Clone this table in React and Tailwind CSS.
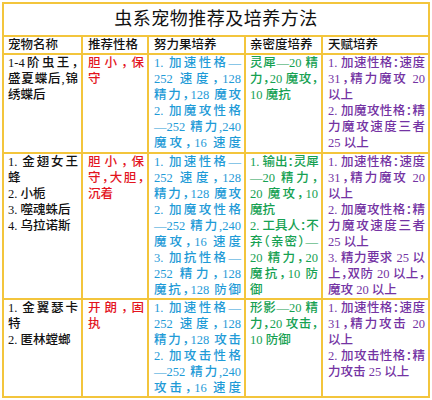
const j = (t) => ({ t, j: true });
const r = (t) => ({ t, j: false });

const headers = ["宠物名称", "推荐性格", "努力果培养", "亲密度培养", "天赋培养"];

const colColor = [
  "text-[#111111]",
  "text-[#e3141e]",
  "text-[#1f9bd7]",
  "text-[#16a152]",
  "text-[#7433a3]",
];

const colPad = ["pl-[4px] pr-[3px]", "pl-[5px] pr-[3px]", "pl-[5px] pr-[3px]", "pl-[4px] pr-[3px]", "pl-[5px] pr-[3px]"];

const rows = [
  [
    [j("1-4阶虫王，"), j("盛夏蝶后,锦"), r("绣蝶后")],
    [j("胆小，保"), r("守")],
    [j("1. 加速性格—"), j("252 速度，128"), j("精力，128 魔攻"), j("2. 加魔攻性格"), j("—252 精力,240"), j("魔攻，16 速度")],
    [j("灵犀—20 精"), j("力，20 魔攻，"), r("10 魔抗")],
    [j("1. 加速性格：速度"), j("31，精力魔攻 20"), r("以上"), j("2. 加魔攻性格：精"), j("力魔攻速度三者"), r("25 以上")],
  ],
  [
    [j("1. 金翅女王"), r("蜂"), r("2. 小栀"), r("3. 噬魂蛛后"), r("4. 乌拉诺斯")],
    [j("胆小，保"), j("守，大胆，"), r("沉着")],
    [
      j("1. 加速性格—"), j("252 速度，128"), j("精力，128 魔攻"),
      j("2. 加魔攻性格"), j("—252 精力,240"), j("魔攻，16 速度"),
      j("3. 加抗性格—"), j("252 精力，128"), j("魔抗，128 防御"),
    ],
    [
      j("1. 输出：灵犀"), j("—20 精力，"), j("20 魔攻，10"), r("魔抗"),
      j("2. 工具人：不"), j("弃（亲密）—"), j("20 精力，20"), j("魔抗，10 防"), r("御"),
    ],
    [
      j("1. 加速性格：速度"), j("31，精力魔攻 20"), r("以上"),
      j("2. 加魔攻性格：精"), j("力魔攻速度三者"), r("25 以上"),
      j("3. 精力要求 25 以"), j("上，双防 20 以上，"), r("魔攻 20 以上"),
    ],
  ],
  [
    [j("1. 金翼瑟卡"), r("特"), r("2. 匿林螳螂")],
    [j("开朗，固"), r("执")],
    [j("1. 加速性格—"), j("252 速度，128"), j("精力，128 攻击"), j("2. 加攻击性格"), j("—252 精力,240"), j("攻击，16 速度")],
    [j("形影—20 精"), j("力，20 攻击，"), r("10 防御")],
    [j("1. 加速性格：速度"), j("31，精力攻击 20"), r("以上"), j("2. 加攻击性格：精"), r("力攻击 25 以上")],
  ],
];

function Cell({ lines, col }) {
  return (
    <div className={`bg-white ${colPad[col]} ${colColor[col]}`}>
      {lines.map((line, i) => (
        <div
          key={i}
          className={
            line.j
              ? "h-4 leading-4 whitespace-nowrap text-justify [text-align-last:justify]"
              : "h-4 leading-4 whitespace-nowrap"
          }
        >
          {line.t}
        </div>
      ))}
    </div>
  );
}

export default function App() {
  return (
    <div className="w-[432px] h-[400px] bg-white pl-[2px] pt-[2px] font-['Liberation_Serif','Noto_Sans_CJK_SC',serif] text-[12.5px] font-medium [font-feature-settings:'halt']">
      <div className="w-[428px] grid grid-cols-[77px_64px_95px_75px_105px] grid-rows-[31px_16px_97px_144px_96px] gap-[2px] p-[2px] bg-[#f3c53c]">
        <div className="col-span-5 bg-white flex items-center justify-center text-[18px] font-normal text-[#111111] tracking-[0.5px]">
          虫系宠物推荐及培养方法
        </div>
        {headers.map((h, i) => (
          <div key={h} className={`bg-white ${colPad[i]} leading-4 text-[#111111]`}>
            {h}
          </div>
        ))}
        {rows.map((row, ri) =>
          row.map((lines, ci) => <Cell key={`${ri}-${ci}`} lines={lines} col={ci} />)
        )}
      </div>
    </div>
  );
}
